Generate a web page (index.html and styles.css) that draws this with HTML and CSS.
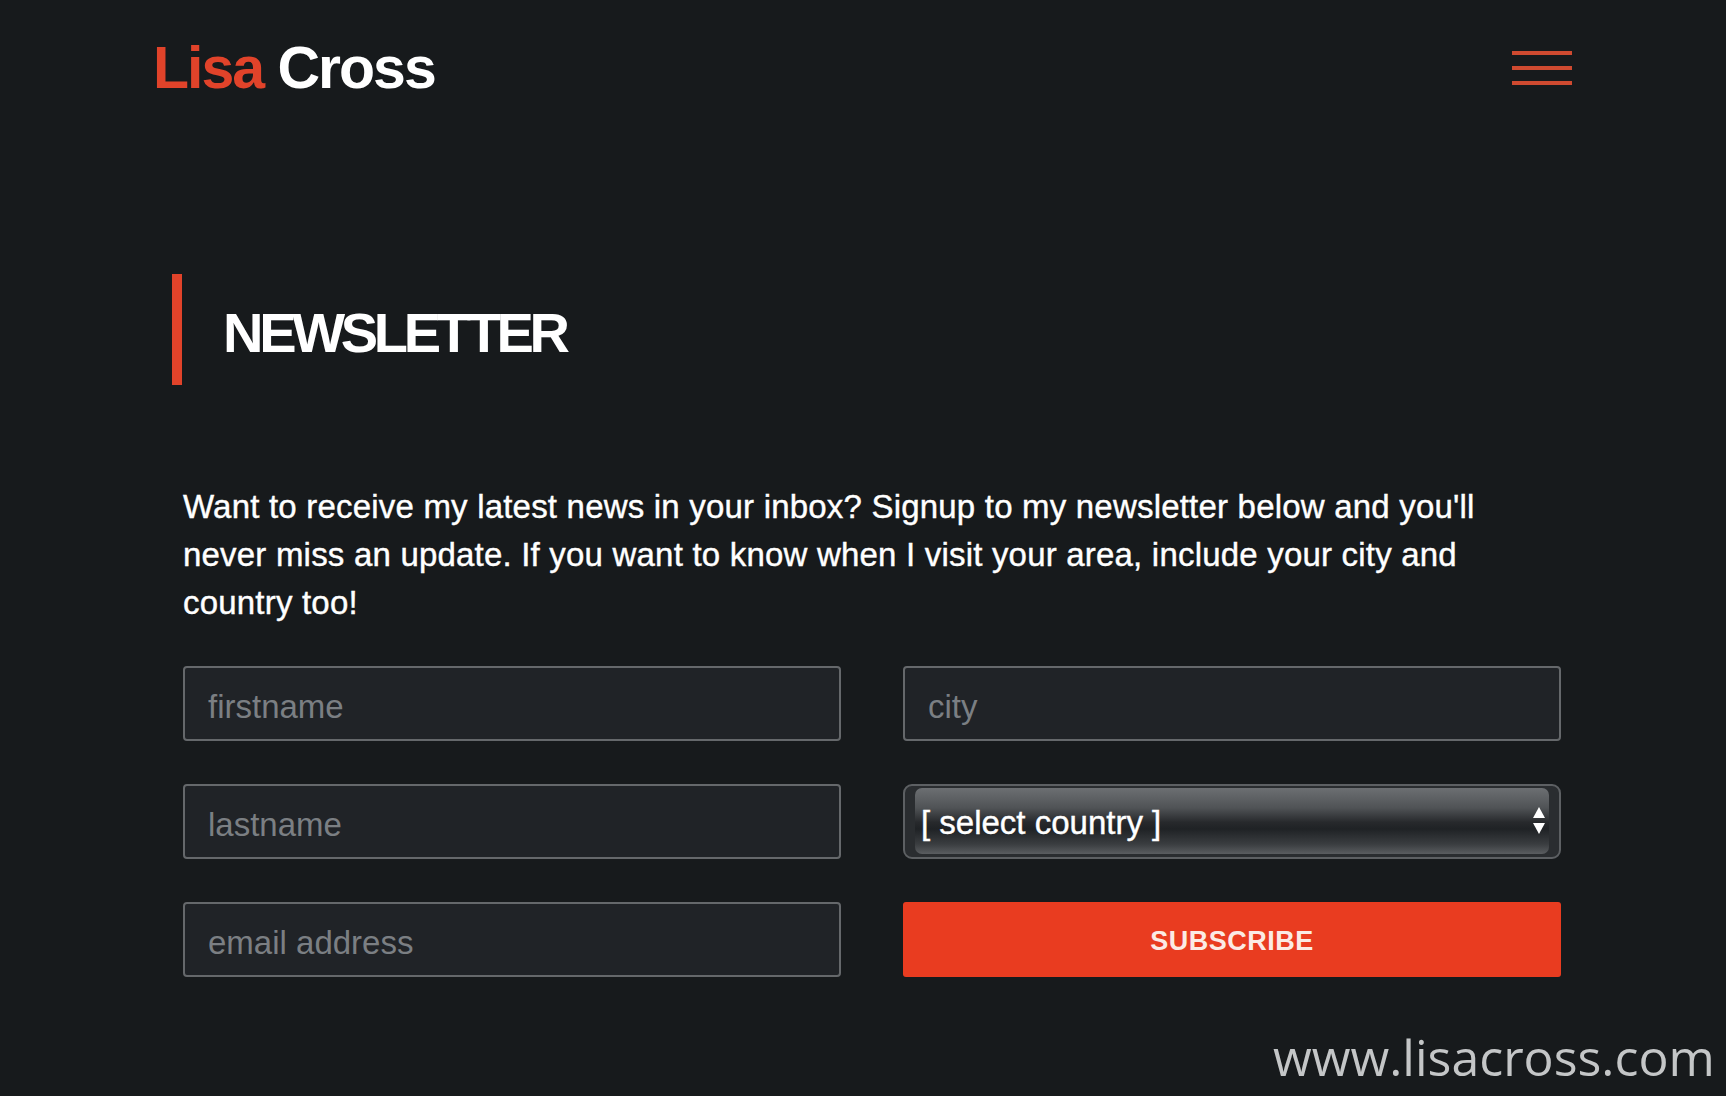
FILE: index.html
```html
<!DOCTYPE html>
<html lang="en">
<head>
    <meta charset="UTF-8">
    <meta name="viewport" content="width=device-width, initial-scale=1.0">
    <title>Lisa Cross - Newsletter</title>
    <link rel="stylesheet" href="styles.css">
</head>
<body>

    <!-- Header: logo and menu -->
    <header class="site-header">
        <a class="logo" href="#"><span class="logo-first">Lisa</span> Cross</a>
        <button class="menu-toggle" aria-label="Menu">
            <span></span>
            <span></span>
            <span></span>
        </button>
    </header>

    <main class="newsletter">
        <h2 class="section-title">NEWSLETTER</h2>

        <p class="intro">Want to receive my latest news in your inbox? Signup to my newsletter below and you'll never miss an update. If you want to know when I visit your area, include your city and country too!</p>

        <!-- Signup form, two columns -->
        <form class="signup-form">
            <input type="text" class="field" placeholder="firstname">
            <input type="text" class="field" placeholder="city">
            <input type="text" class="field" placeholder="lastname">
            <div class="select-wrap">
                <div class="select-inner">
                    <span>[ select country ]</span>
                    <svg class="select-arrows" width="14" height="30" viewBox="0 0 14 30">
                        <polygon points="7,1 13,12 1,12" fill="#fff"/>
                        <polygon points="1,17 13,17 7,28" fill="#fff"/>
                    </svg>
                </div>
            </div>
            <input type="email" class="field" placeholder="email address">
            <button type="button" class="subscribe-btn">SUBSCRIBE</button>
        </form>
    </main>

    <div class="site-mark">www.lisacross.com</div>

</body>
</html>
```

FILE: styles.css
```css
html, body {
    overflow: hidden;
}
body {
    margin: 0;
    height: 1096px;
    position: relative;
    background-color: #171a1c;
    color: #fff;
    font-family: "Liberation Sans", Arial, sans-serif;
}
.site-header {
    display: flex;
    justify-content: space-between;
    align-items: flex-start;
    padding: 39px 154px 0 153px;
}
.logo {
    font-size: 59px;
    line-height: 59px;
    font-weight: bold;
    letter-spacing: -2px;
    color: #fff;
    text-decoration: none;
}
.logo-first {
    color: #e1432a;
}
.menu-toggle {
    display: flex;
    flex-direction: column;
    gap: 11px;
    width: 60px;
    margin-top: 12px;
    padding: 0;
    background: none;
    border: none;
}
.menu-toggle span {
    display: block;
    height: 4px;
    background-color: #cf4a30;
}
.newsletter {
    padding: 176px 0 0 183px;
    width: 1378px;
}
.section-title {
    margin: 0 0 98px -11px;
    padding: 6px 0 0 41px;
    border-left: 10px solid #e1432a;
    font-size: 56px;
    line-height: 105px;
    font-weight: bold;
    letter-spacing: -4.3px;
}
.intro {
    width: 1345px;
    margin: 0 0 39px 0;
    font-size: 33px;
    line-height: 48px;
    letter-spacing: 0.2px;
    -webkit-text-stroke: 0.4px #fff;
}
.signup-form {
    display: grid;
    grid-template-columns: 658px 658px;
    column-gap: 62px;
    row-gap: 43px;
}
.field {
    box-sizing: border-box;
    height: 75px;
    padding: 6px 23px 0;
    background-color: #202327;
    border: 2px solid #65686b;
    border-radius: 4px;
    color: #fff;
    font-family: "Liberation Sans", Arial, sans-serif;
    font-size: 33px;
}
.field::placeholder {
    color: #7b7f83;
}
.select-wrap {
    box-sizing: border-box;
    height: 75px;
    padding: 2px 10px 3px;
    background-color: #2a2d30;
    border: 2px solid #5d6063;
    border-radius: 9px;
}
.select-inner {
    display: flex;
    justify-content: space-between;
    align-items: center;
    height: 100%;
    padding: 4px 0 0 6px;
    box-sizing: border-box;
    border-radius: 7px;
    background: linear-gradient(to bottom, #6c6f72 0%, #505356 30%, #27292c 52%, #1f2225 62%, #3a3d40 85%, #5a5d60 100%);
    font-size: 33px;
    color: #fff;
    -webkit-text-stroke: 0.4px #fff;
}
.select-arrows {
    margin: -4px 3px 0 0;
}
.subscribe-btn {
    height: 75px;
    padding-top: 4px;
    background-color: #e93c20;
    border: none;
    border-radius: 3px;
    color: #fbebe5;
    font-family: "Liberation Sans", Arial, sans-serif;
    font-size: 27px;
    font-weight: bold;
    letter-spacing: 0.5px;
}
.site-mark {
    position: absolute;
    left: 1273px;
    top: 1032px;
    font-family: "Open Sans", sans-serif;
    font-size: 50px;
    line-height: 50px;
    color: #c4c6c7;
    white-space: nowrap;
}
```
